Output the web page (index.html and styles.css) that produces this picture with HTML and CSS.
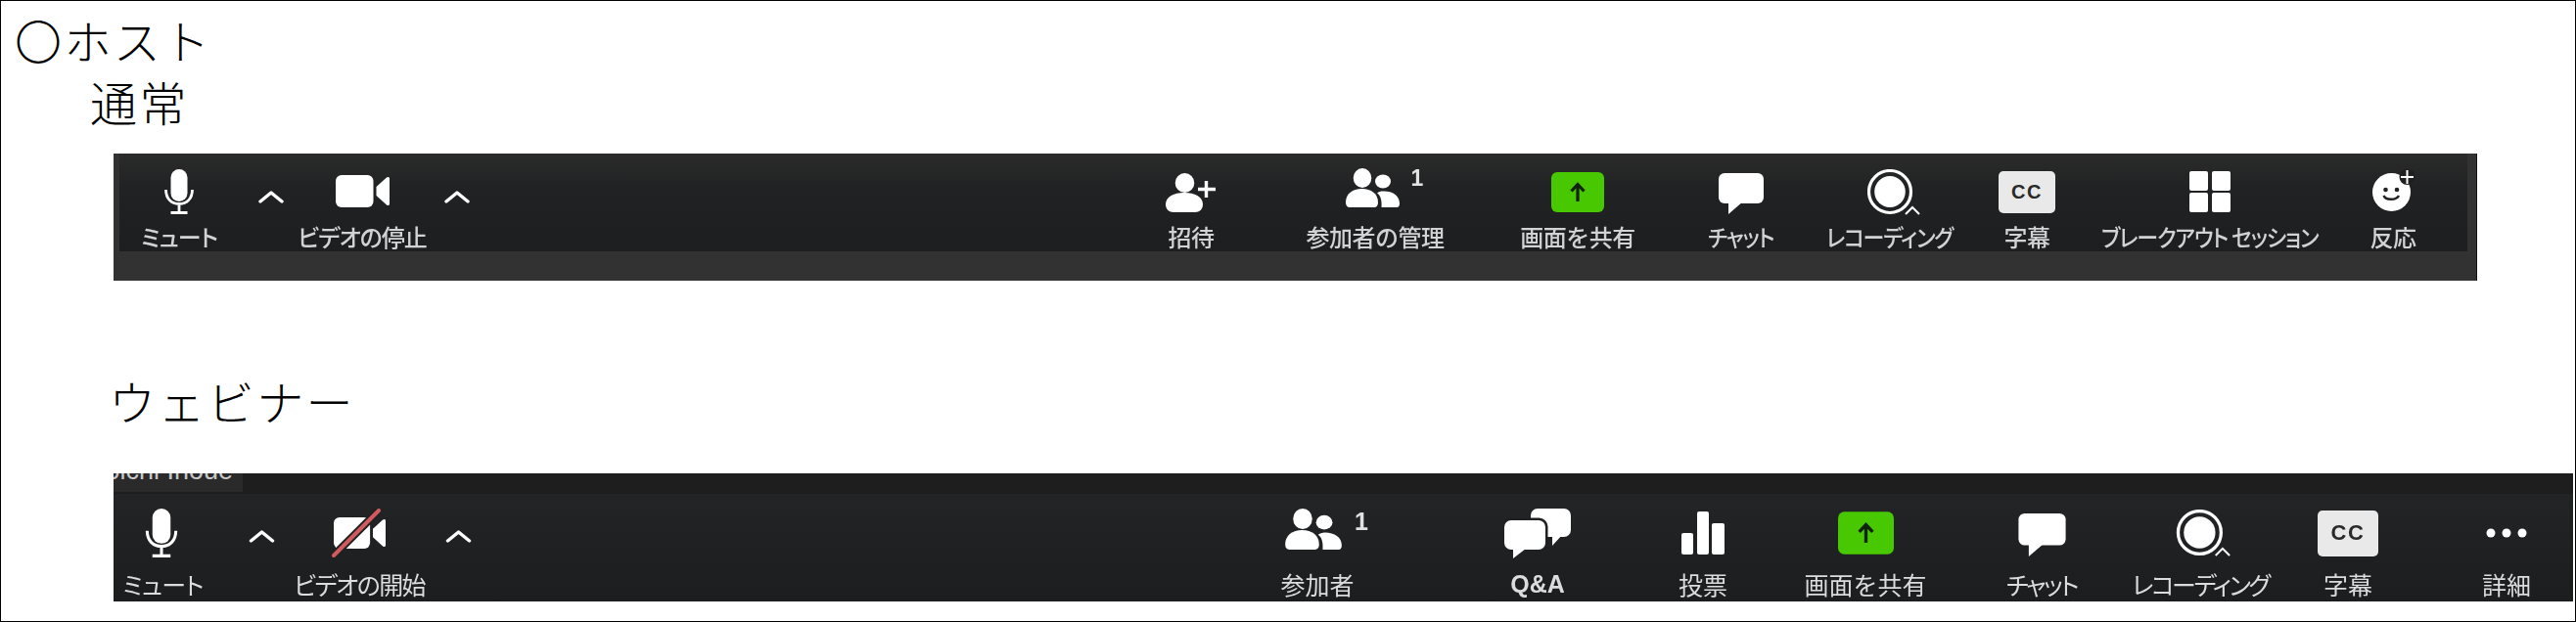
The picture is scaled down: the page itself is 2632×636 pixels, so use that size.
FILE: index.html
```html
<!DOCTYPE html>
<html lang="ja">
<head>
<meta charset="utf-8">
<title>ホスト</title>
<link rel="stylesheet" href="styles.css">
</head>
<body>
<svg class="defs" xmlns="http://www.w3.org/2000/svg">
  <symbol id="mic" viewBox="0 0 30 46">
    <rect x="6.500" y="0" width="17" height="33" rx="8.500" fill="#fff"/>
    <path d="M1.500 21c0 9 5.500 14.500 13.500 14.500S28.500 30 28.500 21M15 35.500V44M6.500 44.500h17" fill="none" stroke="#fff" stroke-width="2.800"/>
  </symbol>
  <symbol id="video" viewBox="0 0 55 33">
    <rect x="0" y="0" width="38.500" height="33" rx="6" fill="#fff"/>
    <path d="M41.500 12 52 2.500c1.500-1.200 3-.6 3 1.200v25.600c0 1.800-1.500 2.400-3 1.200L41.500 21z" fill="#fff"/>
  </symbol>
  <symbol id="chev" viewBox="0 0 26 14">
    <path d="M2 12 13 3l11 9" fill="none" stroke="#fff" stroke-width="3.400" stroke-linecap="round" stroke-linejoin="round"/>
  </symbol>
  <symbol id="invite" viewBox="0 0 52 40">
    <ellipse cx="19.500" cy="10" rx="9.800" ry="10" fill="#fff"/>
    <path d="M0 32c0-8 8.500-12 19-12s19 4 19 12c0 5-3.500 8-8 8H8c-4.500 0-8-3-8-8z" fill="#fff"/>
    <path d="M41.500 8v17M33 16.500h18" fill="none" stroke="#fff" stroke-width="3.400"/>
  </symbol>
  <symbol id="people" viewBox="0 0 55 40">
    <ellipse cx="17" cy="10" rx="9.300" ry="10" fill="#fff"/>
    <ellipse cx="38" cy="13.500" rx="8" ry="7" fill="#fff"/>
    <path d="M0 35c0-9 7-14 16.500-14S33 26 33 35c0 3-1.500 5-4 5H4c-2.500 0-4-2-4-5z" fill="#fff"/>
    <path d="M37 23.500c10-.6 18 4 18 12.500 0 2.500-1 4-3 4H36.500c.5-6-.5-12-4.500-14.500 1.500-1.200 3-1.800 5-2z" fill="#fff"/>
  </symbol>
  <symbol id="share" viewBox="0 0 54 41">
    <rect width="54" height="41" rx="6" fill="#47c800"/>
    <path d="M27 30V13M20.500 19.500 27 12.500l6.500 7" fill="none" stroke="#10240a" stroke-width="3.200"/>
  </symbol>
  <symbol id="chat" viewBox="0 0 46 42">
    <rect width="46" height="31" rx="6" fill="#fff"/>
    <path d="M10 28v14l15-13z" fill="#fff"/>
  </symbol>
  <symbol id="record" viewBox="0 0 54 47">
    <ellipse cx="23" cy="23" rx="21.500" ry="21.500" fill="none" stroke="#fff" stroke-width="3.200"/>
    <ellipse cx="23" cy="23" rx="15.800" ry="16" fill="#fff"/>
    <path d="M39 46l7-7 7 7" fill="none" stroke="#fff" stroke-width="2"/>
  </symbol>
  <symbol id="grid4" viewBox="0 0 42 42">
    <rect width="19" height="20" rx="2" fill="#fff"/>
    <rect x="23" width="19" height="20" rx="2" fill="#fff"/>
    <rect y="22" width="19" height="20" rx="2" fill="#fff"/>
    <rect x="23" y="22" width="19" height="20" rx="2" fill="#fff"/>
  </symbol>
  <symbol id="react" viewBox="0 0 43 43">
    <circle cx="19.500" cy="23.500" r="19.500" fill="#fff"/>
    <circle cx="35.500" cy="8" r="8" fill="#1f1f1f"/>
    <path d="M35.500 1v14M29 8h13" fill="none" stroke="#fff" stroke-width="2"/>
    <circle cx="13.500" cy="21" r="2.300" fill="#222"/>
    <circle cx="25" cy="21" r="2.300" fill="#222"/>
    <path d="M11.500 27c2 5 13 5 15.500 0" fill="none" stroke="#222" stroke-width="2.400"/>
  </symbol>
  <symbol id="qa" viewBox="0 0 68 51">
    <rect x="27" width="41" height="29" rx="7" fill="#fff"/>
    <path d="M49 26v12l11-12z" fill="#fff"/>
    <rect x="-2.500" y="9.500" width="47" height="35" rx="9" fill="#1f2022"/>
    <rect y="12" width="42" height="30" rx="7" fill="#fff"/>
    <path d="M9 40v11l13-10z" fill="#fff"/>
  </symbol>
  <symbol id="poll" viewBox="0 0 44 44">
    <rect y="22" width="12" height="22" rx="2" fill="#fff"/>
    <rect x="16" width="12" height="44" rx="2" fill="#fff"/>
    <rect x="31" y="12" width="13" height="32" rx="2" fill="#fff"/>
  </symbol>
  <symbol id="dots" viewBox="0 0 42 10">
    <circle cx="5" cy="5" r="4.500" fill="#fff"/>
    <circle cx="21" cy="5" r="4.500" fill="#fff"/>
    <circle cx="37" cy="5" r="4.500" fill="#fff"/>
  </symbol>
</svg>

<main class="page">
  <h1 class="title title-host">〇ホスト</h1>
  <h2 class="title title-normal">通常</h2>

  <section class="shell-a">
    <div class="tb tb-a">
      <div class="item"><div class="ico"><svg class="i-mic"><use href="#mic"/></svg></div><span class="lbl k-b">ミュート</span></div>
      <div class="item"><div class="ico"><svg class="i-chev"><use href="#chev"/></svg></div></div>
      <div class="item"><div class="ico"><svg class="i-video"><use href="#video"/></svg></div><span class="lbl k-b">ビデオの停止</span></div>
      <div class="item"><div class="ico"><svg class="i-chev"><use href="#chev"/></svg></div></div>
      <div class="spacer"></div>
      <div class="item"><div class="ico"><svg class="i-invite"><use href="#invite"/></svg></div><span class="lbl">招待</span></div>
      <div class="item"><div class="ico"><span class="with-count"><svg class="i-people"><use href="#people"/></svg><b class="count">1</b></span></div><span class="lbl">参加者の管理</span></div>
      <div class="item"><div class="ico"><svg class="i-share"><use href="#share"/></svg></div><span class="lbl">画面を共有</span></div>
      <div class="item"><div class="ico"><svg class="i-chat"><use href="#chat"/></svg></div><span class="lbl k-a">チャット</span></div>
      <div class="item"><div class="ico"><svg class="i-record"><use href="#record"/></svg></div><span class="lbl k-a">レコーディング</span></div>
      <div class="item"><div class="ico"><span class="cc">CC</span></div><span class="lbl">字幕</span></div>
      <div class="item"><div class="ico"><svg class="i-grid"><use href="#grid4"/></svg></div><span class="lbl k-a">ブレークアウト セッション</span></div>
      <div class="item"><div class="ico"><svg class="i-react"><use href="#react"/></svg></div><span class="lbl">反応</span></div>
    </div>
  </section>

  <h2 class="title title-webinar">ウェビナー</h2>

  <section class="shell-b">
    <div class="nameband"><div class="nametag">Koichi Inoue</div></div>
    <div class="tb tb-b">
      <div class="item"><div class="ico"><svg class="i-mic"><use href="#mic"/></svg></div><span class="lbl k-c">ミュート</span></div>
      <div class="item"><div class="ico"><svg class="i-chev"><use href="#chev"/></svg></div></div>
      <div class="item"><div class="ico"><svg class="i-video"><use href="#video"/></svg><svg class="slash" viewBox="0 0 50 50"><path d="M2 48 48 2" stroke="#1f2022" stroke-width="8" fill="none"/><path d="M2 48 48 2" stroke="#d05a5c" stroke-width="4" stroke-linecap="round" fill="none"/></svg></div><span class="lbl k-b">ビデオの開始</span></div>
      <div class="item"><div class="ico"><svg class="i-chev"><use href="#chev"/></svg></div></div>
      <div class="spacer"></div>
      <div class="item"><div class="ico"><span class="with-count"><svg class="i-people"><use href="#people"/></svg><b class="count">1</b></span></div><span class="lbl">参加者</span></div>
      <div class="item"><div class="ico"><svg class="i-qa"><use href="#qa"/></svg></div><span class="lbl lbl-latin">Q&amp;A</span></div>
      <div class="item"><div class="ico"><svg class="i-poll"><use href="#poll"/></svg></div><span class="lbl">投票</span></div>
      <div class="item"><div class="ico"><svg class="i-share"><use href="#share"/></svg></div><span class="lbl">画面を共有</span></div>
      <div class="item"><div class="ico"><svg class="i-chat"><use href="#chat"/></svg></div><span class="lbl k-a">チャット</span></div>
      <div class="item"><div class="ico"><svg class="i-record"><use href="#record"/></svg></div><span class="lbl k-a">レコーディング</span></div>
      <div class="item"><div class="ico"><span class="cc">CC</span></div><span class="lbl">字幕</span></div>
      <div class="spacer"></div>
      <div class="item"><div class="ico"><svg class="i-dots"><use href="#dots"/></svg></div><span class="lbl">詳細</span></div>
    </div>
  </section>
</main>
</body>
</html>
```

FILE: styles.css
```css
* { box-sizing: border-box; }
html, body { margin: 0; background: #fff; }
.defs { display: none; }

.page {
  width: 2632px;
  height: 636px;
  border: 1px solid #000;
  padding-top: 8px;
  overflow: hidden;
  font-family: "Noto Sans CJK JP", "Noto Sans", sans-serif;
}

.title {
  margin: 0;
  font-size: 48px;
  font-weight: 300;
  line-height: 63px;
  color: #000;
  letter-spacing: 2.400px;
}
.title-host { padding-left: 14px; }
.title-normal { padding-left: 91px; height: 62px; }
.title-webinar { padding-left: 110px; margin-top: 91px; }

.shell-a {
  width: 2415px;
  height: 130px;
  margin: 23px 0 0 115px;
  padding: 0 9px 0 6px;
  background: #323232;
  border-right: 1px solid #111;
}
.shell-b {
  width: 2513px;
  height: 131px;
  margin: 43px 0 0 115px;
  background: #1f2022;
}

.nameband {
  display: flex;
  height: 21px;
  background: #1e1e1e;
}
.nametag {
  display: flex;
  justify-content: flex-end;
  align-items: flex-end;
  width: 132px;
  height: 19px;
  padding: 0 10px 7px 0;
  overflow: hidden;
  background: #2a2a2a;
  color: #c9c9c9;
  font: 27px/30px "Liberation Sans", sans-serif;
  white-space: nowrap;
}

.tb {
  display: grid;
  padding-top: 15px;
  filter: blur(0.45px);
}
.tb-a {
  height: 100px;
  grid-template-columns: 122px 66px 120px 74px 626px 174px 202px 212px 122px 180px 102px 272px 102px;
  background: linear-gradient(#2b2b2b, #212223 35%, #1d1e1f);
}
.tb-b {
  height: 110px;
  grid-template-columns: 101px 100px 100px 102px 720px 214px 236px 102px 230px 130px 194px 108px 40px 136px;
  background: linear-gradient(#232426, #1c1d1f);
}

.item {
  display: flex;
  flex-direction: column;
  align-items: center;
  min-width: 0;
}
.ico {
  position: relative;
  display: flex;
  align-items: center;
  justify-content: center;
  height: 48px;
}
.tb-b .ico { height: 50px; }

.lbl {
  margin-top: 8px;
  font-size: 24px;
  font-weight: 500;
  line-height: 27px;
  color: #d2d2d2;
  white-space: nowrap;
  letter-spacing: -0.5px;
}
.tb-b .lbl {
  margin-top: 12px;
  font-size: 25px;
  line-height: 30px;
  font-weight: 400;
  letter-spacing: 0;
  color: #dcdcdc;
}
.tb-b .lbl-latin {
  font-family: "Liberation Sans", sans-serif;
  font-weight: 700;
}
.k-a, .k-b, .k-c { font-feature-settings: "palt"; }
.tb-a .k-a { letter-spacing: -1.3px; transform: scaleX(0.917); }
.tb-a .k-b { letter-spacing: -1px; }
.tb-b .k-a { letter-spacing: -2.400px; }
.tb-b .k-b { letter-spacing: -1.600px; }
.tb-b .k-c { letter-spacing: -0.8px; }

.i-mic { width: 30px; height: 46px; }
.i-chev { width: 26px; height: 14px; margin-top: 10px; }
.i-video { width: 55px; height: 33px; margin-top: -2px; }
.i-invite { width: 52px; height: 40px; margin-top: 2px; }
.i-people { display: block; width: 55px; height: 40px; }
.i-share { width: 54px; height: 41px; }
.i-chat { width: 46px; height: 42px; margin-top: 4px; }
.i-record { width: 54px; height: 47px; margin-left: 10px; }
.i-grid { width: 42px; height: 42px; }
.i-react { width: 43px; height: 43px; margin-top: -4px; }

.tb-b .i-mic { width: 34px; height: 50px; margin-right: 3px; }
.tb-b .i-chev { width: 27px; height: 14px; margin-top: 5px; }
.tb-b .i-video { width: 53px; height: 34px; margin-top: 0; }
.tb-b .i-people { width: 58px; height: 42px; }
.tb-b .i-share { width: 57px; height: 44px; }
.tb-b .i-chat { width: 49px; height: 44px; margin-top: 4px; }
.tb-b .i-record { width: 57px; height: 48px; margin-left: 6px; }
.i-qa { width: 68px; height: 51px; }
.i-poll { width: 44px; height: 44px; }
.i-dots { width: 42px; height: 10px; }

.slash {
  position: absolute;
  left: -2px;
  top: 0;
  width: 50px;
  height: 50px;
}

.with-count {
  position: relative;
  display: block;
  margin: -8px 6px 0 0;
}
.tb-b .with-count { margin: -8px 8px 0 0; }
.count {
  position: absolute;
  left: calc(100% + 12px);
  top: -3px;
  font: 700 23px/26px "Liberation Sans", sans-serif;
  color: #e2e2e2;
}
.tb-b .count { left: calc(100% + 13px); top: 0; font-size: 25px; }

.cc {
  display: flex;
  align-items: center;
  justify-content: center;
  width: 58px;
  height: 43px;
  border-radius: 5px;
  background: #e9e9e9;
  color: #2a2a2a;
  font: 700 20px/1 "Liberation Sans", sans-serif;
  letter-spacing: 1.500px;
}
.tb-b .cc { width: 62px; height: 47px; font-size: 22px; }
```
